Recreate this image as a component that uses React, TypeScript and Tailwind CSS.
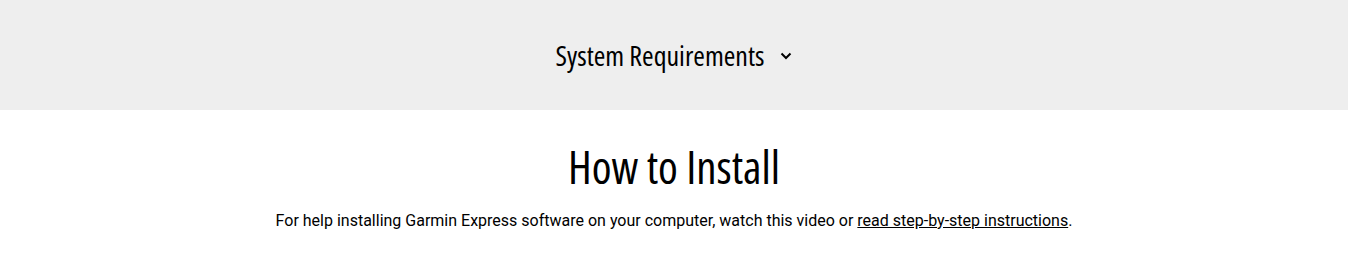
export default function App() {
  return (
    <div className="w-full bg-white text-black font-['Roboto','Liberation_Sans',sans-serif]">
      {/* System requirements toggle */}
      <div className="h-[110px] bg-[#eeeeee] flex items-center justify-center">
        <button className="flex items-center gap-[16px]">
          <span className="font-['Open_Sans',sans-serif] font-stretch-condensed font-medium text-[28px] leading-none">
            System Requirements
          </span>
          <svg viewBox="0 0 12 8" className="w-[12px] h-[8px] mt-[1px]" fill="none" stroke="currentColor" strokeWidth={2}>
            <path d="M1.5 1.5 L6 6 L10.5 1.5" />
          </svg>
        </button>
      </div>

      {/* How to install */}
      <div className="flex flex-col items-center pt-[27px]">
        <h2 className="font-['Open_Sans',sans-serif] font-stretch-condensed font-medium text-[45px] leading-[60px]">
          How to Install
        </h2>
        <p className="mt-[12px] text-[16px] leading-[24px]">
          For help installing Garmin Express software on your computer, watch this video or{' '}
          <a href="#" className="underline">read step-by-step instructions</a>.
        </p>
      </div>
    </div>
  );
}
